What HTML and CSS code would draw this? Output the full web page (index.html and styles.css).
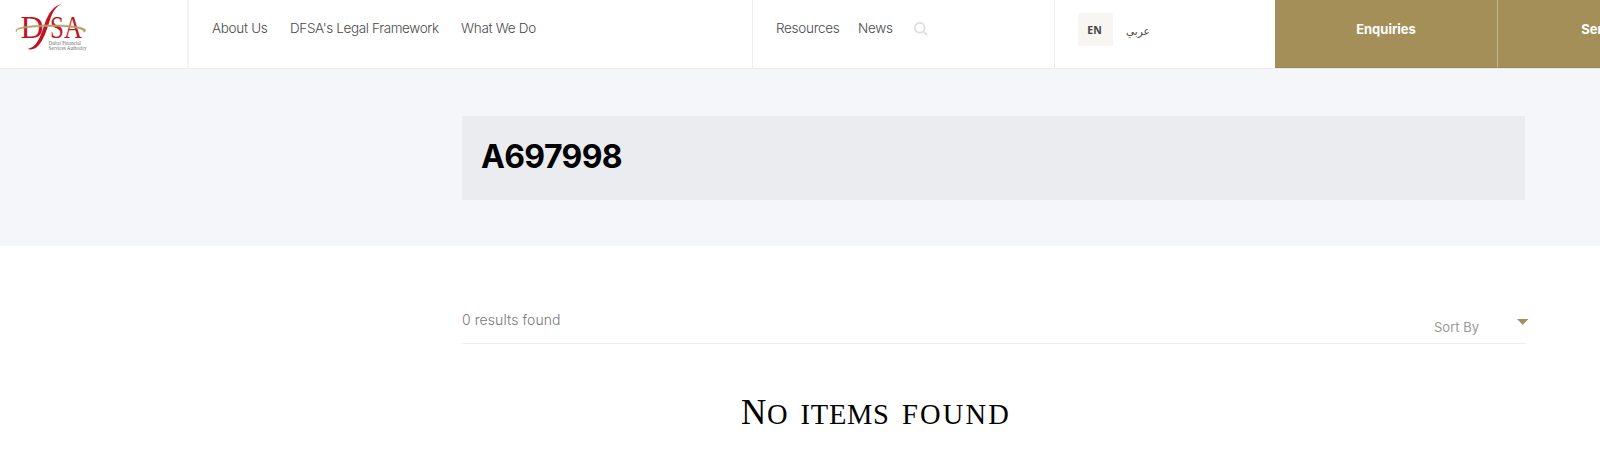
FILE: index.html
```html
<!DOCTYPE html>
<html lang="en">
<head>
<meta charset="utf-8">
<title>DFSA Search</title>
<link rel="stylesheet" href="styles.css">
</head>
<body>
<header class="header">
  <a class="brand">
    <svg class="logo" width="74" height="50" viewBox="14 2 74 50">
      <g class="logo-red">
        <text x="20.500" y="38" font-size="31" textLength="23" lengthAdjust="spacingAndGlyphs">D</text>
        <path d="M62.500 4C54 5 48.500 13 45 23C41 34 38 47 28 48.800C29 50 34 50 38 46C43 41 46.500 31 49 23C52 13 55 6.500 62.500 4Z"/>
        <text x="50" y="38" font-size="31" textLength="32" lengthAdjust="spacingAndGlyphs">SA</text>
      </g>
      <path class="logo-arc" d="M17 32.200C13 29 20 26 42 25.200C66 24 87 27 85.600 30.500C85.300 31.500 84.500 32 83.500 32.200C86 28 66 25.700 42 26.600C22 27.400 14 29.500 17 32.200Z"/>
      <g class="logo-small">
        <text x="48.500" y="45" textLength="32.500" lengthAdjust="spacingAndGlyphs">Dubai Financial</text>
        <text x="48.500" y="49.500" textLength="38" lengthAdjust="spacingAndGlyphs">Services Authority</text>
      </g>
    </svg>
  </a>
  <nav class="nav-main"><a class="n1">About Us</a><a class="n2">DFSA's Legal Framework</a><a class="n3">What We Do</a></nav>
  <nav class="nav-side"><a class="n4">Resources</a><a class="n5">News</a>
    <svg class="search" width="14" height="14" viewBox="0 0 14 14"><circle cx="5.800" cy="5.800" r="4.900"/><path d="M9.300 9.300L13 12.800"/></svg>
  </nav>
  <div class="lang"><a class="en">EN</a><a class="ar" lang="ar">عربي</a></div>
  <a class="cta">Enquiries</a>
  <a class="cta cta-last">Services</a>
</header>
<section class="hero"><h1 class="query">A697998</h1></section>
<main class="results">
  <div class="bar">
    <span class="count">0 results found</span>
    <span class="sort">Sort By</span>
    <svg class="caret" width="12" height="6" viewBox="0 0 12 6"><path d="M0 0H11.500L5.700 5.800Z"/></svg>
  </div>
  <h2 class="empty"><span class="cap">N</span>o items <span class="wide">found</span></h2>
</main>
</body>
</html>
```

FILE: styles.css
```css
* { box-sizing: border-box; }
body {
  margin: 0;
  overflow: hidden;
  background: #fff;
  color: #4a4a4a;
  font-family: Inter, "Noto Sans", sans-serif;
}
.header {
  display: flex;
  width: 100%;
  height: 69px;
  overflow: hidden;
  border-bottom: 1px solid #ebebed;
}
.brand {
  flex: none;
  width: 189px;
  padding: 2px 0 0 14px;
  border-right: 2px solid #f5f5f6;
}
.logo { display: block; font-family: "Liberation Serif", serif; }
.logo-red { fill: #bf1521; }
.logo-arc { fill: #b5a06a; stroke: #b5a06a; stroke-width: .6; }
.logo-small { fill: #757575; font-size: 5.2px; }
.nav-main, .nav-side {
  display: flex;
  flex: none;
  font-size: 13.5px;
  font-weight: 300;
  letter-spacing: -.3px;
  line-height: 18px;
  white-space: nowrap;
}
.nav-main { width: 564px; padding: 19px 0 0 23px; border-right: 1px solid #eee; }
.nav-side { width: 302px; padding: 19px 0 0 23px; border-right: 1px solid #eee; }
.n1 { width: 78px; }
.n2 { width: 171px; letter-spacing: -.37px; }
.n4 { width: 82px; }
.n5 { width: 56px; }
.search { margin-top: 3px; fill: none; stroke: #dedede; stroke-width: 1.8; }
.lang { display: flex; flex: none; width: 220px; padding: 13px 0 0 23px; }
.en {
  width: 35px;
  height: 33px;
  padding-right: 2px;
  background: #f7f6f2;
  color: #444;
  font: 700 10.5px/35px "Noto Sans", sans-serif;
  text-align: center;
}
.ar { margin-left: 13px; font: 10.5px/37px "DejaVu Sans", sans-serif; }
.cta {
  flex: none;
  width: 223px;
  border-right: 1px solid #c6b991;
  border-bottom: 1px solid #9c844a;
  background: #a58f59;
  color: #fff;
  font-size: 13px;
  font-weight: 700;
  line-height: 58px;
  text-align: center;
}
.hero { height: 177px; padding: 47px 75px 0 462px; background: #f5f6fa; }
.query {
  height: 84px;
  margin: 0;
  padding-left: 19px;
  background: #ebecf0;
  color: #000;
  font-size: 32px;
  font-weight: 700;
  letter-spacing: -.65px;
  line-height: 81px;
}
.results { padding: 65px 75px 0 462px; }
.bar {
  display: flex;
  height: 33px;
  margin-right: -4px;
  background: linear-gradient(#eee, #eee) left bottom / 1063px 1px no-repeat;
}
.count { width: 972px; color: #777; font-size: 14px; font-weight: 300; letter-spacing: .08px; line-height: 18px; }
.sort { width: 83px; padding-top: 7px; color: #999; font-size: 13px; line-height: 18px; }
.caret { margin-top: 8px; fill: #a58f59; }
.empty {
  margin: 49px 0 0 279px;
  color: #000;
  font: 400 28.5px/40px "Liberation Serif", serif;
  letter-spacing: .7px;
  word-spacing: 4.5px;
  text-transform: uppercase;
  white-space: nowrap;
}
.cap { font-size: 35px; }
.wide { letter-spacing: 2.2px; }
```
